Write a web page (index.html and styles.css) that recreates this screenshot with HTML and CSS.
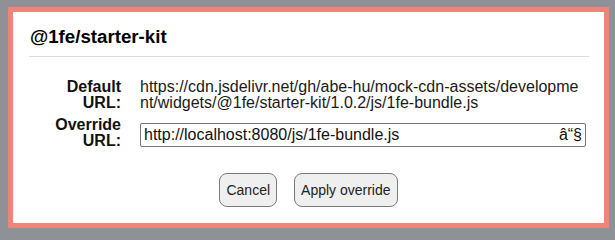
FILE: index.html
```html
<!DOCTYPE html>
<html lang="en">
<head>
<meta charset="utf-8">
<title>@1fe/starter-kit</title>
<link rel="stylesheet" href="styles.css">
</head>
<body>
<div class="dialog">
  <h2 class="title">@1fe/starter-kit</h2>
  <div class="rule"></div>
  <div class="fields">
    <div class="label">Default URL:</div>
    <div class="value">https://cdn.jsdelivr.net/gh/abe-hu/mock-cdn-assets/development/widgets/@1fe/starter-kit/1.0.2/js/1fe-bundle.js</div>
    <div class="label">Override URL:</div>
    <div class="value input-cell">
      <div class="input-wrap">
        <input class="input" type="text" value="http://localhost:8080/js/1fe-bundle.js">
        <span class="clear">â“§</span>
      </div>
    </div>
  </div>
  <div class="actions">
    <button class="btn">Cancel</button>
    <button class="btn">Apply override</button>
  </div>
</div>
</body>
</html>
```

FILE: styles.css
```css
html, body {
  margin: 0;
  padding: 0;
}
body {
  background: #8e9296;
  font-family: "Liberation Sans", Arial, Helvetica, sans-serif;
  color: #111;
  width: 615px;
  height: 233px;
  overflow: hidden;
}
.dialog {
  box-sizing: border-box;
  margin: 7px 6px 0 8px;
  width: 601px;
  height: 221px;
  background: #fff;
  border: 5px solid #ef8579;
  padding: 15px 15px 0 16px;
}
.title {
  margin: 0;
  font-size: 18.7px;
  line-height: 20px;
  font-weight: bold;
  color: #000;
  padding-left: 1px;
}
.rule {
  height: 1px;
  background: #dcdcdc;
  margin-top: 9px;
  width: 560px;
}
.fields {
  display: grid;
  grid-template-columns: 92px 446px;
  column-gap: 19px;
  row-gap: 6px;
  margin-top: 22px;
  font-size: 16px;
  line-height: 16px;
}
.label {
  font-weight: bold;
  text-align: right;
  color: #111;
}
.value {
  word-break: break-all;
  color: #1a1a1a;
}
.input-wrap {
  position: relative;
  width: 446px;
  margin-top: 6px;
}
.input {
  display: block;
  box-sizing: border-box;
  width: 446px;
  height: 24px;
  margin: 0;
  border: 1px solid #767676;
  border-radius: 2px;
  padding: 0 3px;
  font-family: "Liberation Sans", Arial, sans-serif;
  font-size: 16px;
  color: #111;
  background: #fff;
}
.clear {
  position: absolute;
  right: 4px;
  top: 3px;
  font-size: 16px;
  line-height: 18px;
  color: #111;
}
.actions {
  display: flex;
  justify-content: center;
  gap: 17px;
  margin-top: 24px;
  padding-right: 1px;
}
.btn {
  box-sizing: border-box;
  height: 34px;
  padding: 0 6px;
  border: 1px solid #7a7a7a;
  border-radius: 8px;
  background: #efefef;
  font-family: "Liberation Sans", Arial, sans-serif;
  font-size: 14px;
  color: #222;
}
```
